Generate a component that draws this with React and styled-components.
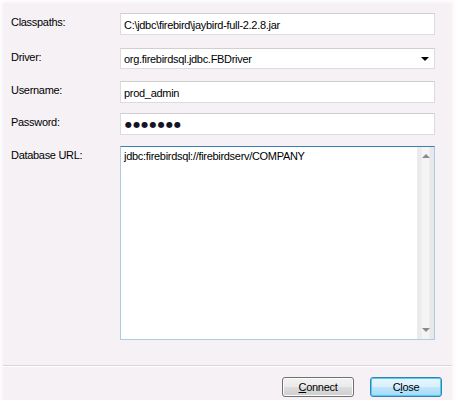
import React from 'react';
import styled, { createGlobalStyle } from 'styled-components';

const GlobalStyle = createGlobalStyle`
  html, body {
    margin: 0;
    padding: 0;
    background: #ffffff;
  }
  body {
    font-family: "Liberation Sans", Arial, sans-serif;
    font-size: 11px;
    color: #000;
  }
`;

const Window = styled.div`
  margin: 3px 0 0 3px;
  width: 449px;
  height: 397px;
  background: #f5f1f5;
  box-shadow: 0 0 4px 1px #f5f1f5;
  display: flex;
  flex-direction: column;
  box-sizing: border-box;
`;

const Form = styled.div`
  padding: 10px 17px 0 8px;
  display: flex;
  flex-direction: column;
`;

const Row = styled.div`
  display: flex;
  align-items: flex-start;
  margin-top: ${p => p.top || 0}px;
`;

const Label = styled.div`
  width: 109px;
  padding-top: 3px;
  letter-spacing: -0.3px;
  line-height: 13px;
`;

const Field = styled.div`
  width: 315px;
  height: ${p => p.h || 22}px;
  box-sizing: border-box;
  background: #fff;
  border: 1px solid #dcdcdc;
  border-top-color: #cfcfcf;
  display: flex;
  align-items: center;
  padding: 1px 3px 0;
  letter-spacing: -0.3px;
  position: relative;
`;

const Arrow = styled.div`
  position: absolute;
  right: 5px;
  top: 8px;
  width: 0;
  height: 0;
  border-left: 4px solid transparent;
  border-right: 4px solid transparent;
  border-top: 4px solid #000;
`;

const Dots = styled.span`
  font-size: 8px;
  letter-spacing: 1.2px;
  color: #141428;
  font-family: "DejaVu Sans", sans-serif;
  padding-left: 1px;
`;

const TextArea = styled.div`
  width: 315px;
  height: 194px;
  box-sizing: border-box;
  background: #fff;
  border: 1px solid #a9cde6;
  border-top-color: #3d7fb3;
  display: flex;
`;

const AreaText = styled.div`
  flex: 1;
  padding: 3px 3px;
  letter-spacing: -0.3px;
  line-height: 13px;
`;

const ScrollBar = styled.div`
  width: 17px;
  background: linear-gradient(to right, #ebebeb 0, #ebebeb 4px, #f4f4f4 5px, #f4f4f4 12px, #e8e8e8 13px, #e8e8e8 100%);
  display: flex;
  flex-direction: column;
  justify-content: space-between;
  align-items: center;
  padding: 7px 0;
`;

const ScrollArrow = styled.div`
  width: 0;
  height: 0;
  border-left: 4px solid transparent;
  border-right: 4px solid transparent;
  ${p => p.up ? 'border-bottom: 4px solid #8a8a8a;' : 'border-top: 4px solid #8a8a8a;'}
`;

const Separator = styled.div`
  margin-top: 25px;
  height: 1px;
  background: #dad6da;
  border-bottom: 1px solid #ffffff;
`;

const Footer = styled.div`
  display: flex;
  justify-content: flex-end;
  gap: 16px;
  padding: 10px 10px 0 0;
`;

const Button = styled.div`
  width: 72px;
  height: 20px;
  box-sizing: border-box;
  border-radius: 3px;
  border: 1px solid ${p => (p.primary ? '#3c7fb1' : '#707070')};
  background: ${p => (p.primary
    ? 'linear-gradient(#eaf6fd 0%, #d9f0fc 50%, #bee6fd 51%, #a7d9f5 100%)'
    : 'linear-gradient(#f2f2f2 0%, #ebebeb 50%, #dddddd 51%, #cfcfcf 100%)')};
  box-shadow: ${p => (p.primary ? 'inset 0 0 0 1px #48d0f5' : 'inset 0 0 0 1px #fcfcfc')};
  display: flex;
  align-items: center;
  justify-content: center;
  letter-spacing: -0.3px;
  font-size: 11px;
`;

export default function App() {
  return (
    <>
      <GlobalStyle />
      <Window>
        <Form>
          <Row>
            <Label>Classpaths:</Label>
            <Field>C:\jdbc\firebird\jaybird-full-2.2.8.jar</Field>
          </Row>
          <Row top={13}>
            <Label>Driver:</Label>
            <Field h={21}>
              org.firebirdsql.jdbc.FBDriver
              <Arrow />
            </Field>
          </Row>
          <Row top={12}>
            <Label>Username:</Label>
            <Field>prod_admin</Field>
          </Row>
          <Row top={10}>
            <Label>Password:</Label>
            <Field><Dots>●●●●●●●</Dots></Field>
          </Row>
          <Row top={11}>
            <Label>Database URL:</Label>
            <TextArea>
              <AreaText>jdbc:firebirdsql://firebirdserv/COMPANY</AreaText>
              <ScrollBar>
                <ScrollArrow up />
                <ScrollArrow />
              </ScrollBar>
            </TextArea>
          </Row>
        </Form>
        <Separator />
        <Footer>
          <Button><span><u>C</u>onnect</span></Button>
          <Button primary><span>C<u>l</u>ose</span></Button>
        </Footer>
      </Window>
    </>
  );
}
